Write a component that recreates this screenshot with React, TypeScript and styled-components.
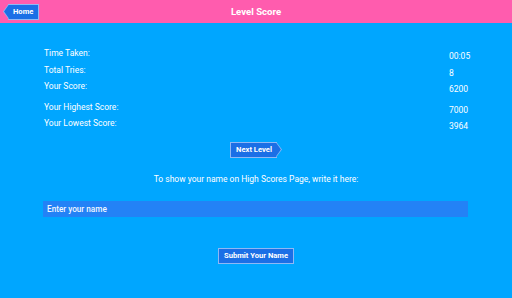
import React, { useState } from 'react';
import styled, { createGlobalStyle } from 'styled-components';

const GlobalStyle = createGlobalStyle`
  html, body {
    margin: 0;
    padding: 0;
    background: #00a6ff;
    font-family: Roboto, 'Liberation Sans', sans-serif;
  }
`;

const Page = styled.div`
  width: 512px;
  height: 298px;
  display: flex;
  flex-direction: column;
  background: #00a6ff;
  color: #ffffff;
  overflow: hidden;
`;

const Header = styled.header`
  height: 23px;
  flex: none;
  display: grid;
  grid-template-columns: 1fr auto 1fr;
  align-items: center;
  background: #ff5cae;
  padding: 0 3px;
`;

const Title = styled.h1`
  margin: 0;
  font-size: 9.6px;
  font-weight: 700;
  color: #fff;
`;

const ArrowButton = styled.button<{ $point: 'left' | 'right' | 'none' }>`
  position: relative;
  height: 16px;
  padding: 0 5px;
  margin-left: ${p => (p.$point === 'left' ? '5px' : '0')};
  margin-right: ${p => (p.$point === 'right' ? '5px' : '0')};
  background: #1b6fe6;
  color: #fff;
  border: 1px solid #8fb8f5;
  ${p => (p.$point === 'left' ? 'border-left: none;' : p.$point === 'right' ? 'border-right: none;' : '')}
  font-family: Roboto, 'Liberation Sans', sans-serif;
  font-size: 7.6px;
  font-weight: 700;
  line-height: 14px;
  cursor: pointer;
  justify-self: start;

  &::before {
    content: '';
    display: ${p => (p.$point === 'none' ? 'none' : 'block')};
    position: absolute;
    top: -1px;
    ${p => (p.$point === 'left' ? 'left: -5px;' : 'right: -5px;')}
    width: 6px;
    height: 16px;
    background: #8fb8f5;
    clip-path: ${p =>
      p.$point === 'left'
        ? 'polygon(0 50%, 100% 0, 100% 100%)'
        : 'polygon(0 0, 100% 50%, 0 100%)'};
  }

  &::after {
    content: '';
    display: ${p => (p.$point === 'none' ? 'none' : 'block')};
    position: absolute;
    top: 0;
    ${p => (p.$point === 'left' ? 'left: -4px;' : 'right: -4px;')}
    width: 5px;
    height: 14px;
    background: #1b6fe6;
    clip-path: ${p =>
      p.$point === 'left'
        ? 'polygon(0 50%, 100% 0, 100% 100%)'
        : 'polygon(0 0, 100% 50%, 0 100%)'};
  }
`;

const Stats = styled.div`
  display: grid;
  grid-template-columns: 1fr 21px;
  padding: 22px 42px 0 44px;
`;

const Label = styled.div<{ $gap?: boolean }>`
  font-size: 8.5px;
  line-height: 16.5px;
  margin-top: ${p => (p.$gap ? '4px' : '0')};
`;

const Value = styled.div<{ $gap?: boolean }>`
  font-size: 8.5px;
  line-height: 16.5px;
  margin-top: ${p => (p.$gap ? '7px' : '3px')};
  margin-bottom: -3px;
`;

const Center = styled.div<{ $top: number }>`
  display: flex;
  justify-content: center;
  margin-top: ${p => p.$top}px;
`;

const Hint = styled.p`
  margin: 15px 0 0;
  text-align: center;
  font-size: 8.5px;
  line-height: 12px;
`;

const NameInput = styled.input`
  display: block;
  margin: 16px 44px 0 43px;
  height: 16px;
  box-sizing: border-box;
  border: none;
  outline: none;
  background: #2382f6;
  color: #fff;
  font-family: Roboto, 'Liberation Sans', sans-serif;
  font-size: 8.2px;
  font-weight: 500;
  padding: 0 4px;

  &::placeholder {
    color: #f2f7ff;
  }
`;

const stats = [
  { label: 'Time Taken:', value: '00:05' },
  { label: 'Total Tries:', value: '8' },
  { label: 'Your Score:', value: '6200' },
  { label: 'Your Highest Score:', value: '7000', gap: true },
  { label: 'Your Lowest Score:', value: '3964' },
];

export default function App() {
  const [name, setName] = useState('');

  return (
    <Page>
      <GlobalStyle />
      <Header>
        <ArrowButton $point="left">Home</ArrowButton>
        <Title>Level Score</Title>
        <span />
      </Header>
      <Stats>
        {stats.map(s => (
          <React.Fragment key={s.label}>
            <Label $gap={s.gap}>{s.label}</Label>
            <Value $gap={s.gap}>{s.value}</Value>
          </React.Fragment>
        ))}
      </Stats>
      <Center $top={10}>
        <ArrowButton $point="right">Next Level</ArrowButton>
      </Center>
      <Hint>To show your name on High Scores Page, write it here:</Hint>
      <NameInput placeholder="Enter your name" value={name} onChange={e => setName(e.target.value)} />
      <Center $top={31}>
        <ArrowButton $point="none">Submit Your Name</ArrowButton>
      </Center>
    </Page>
  );
}
